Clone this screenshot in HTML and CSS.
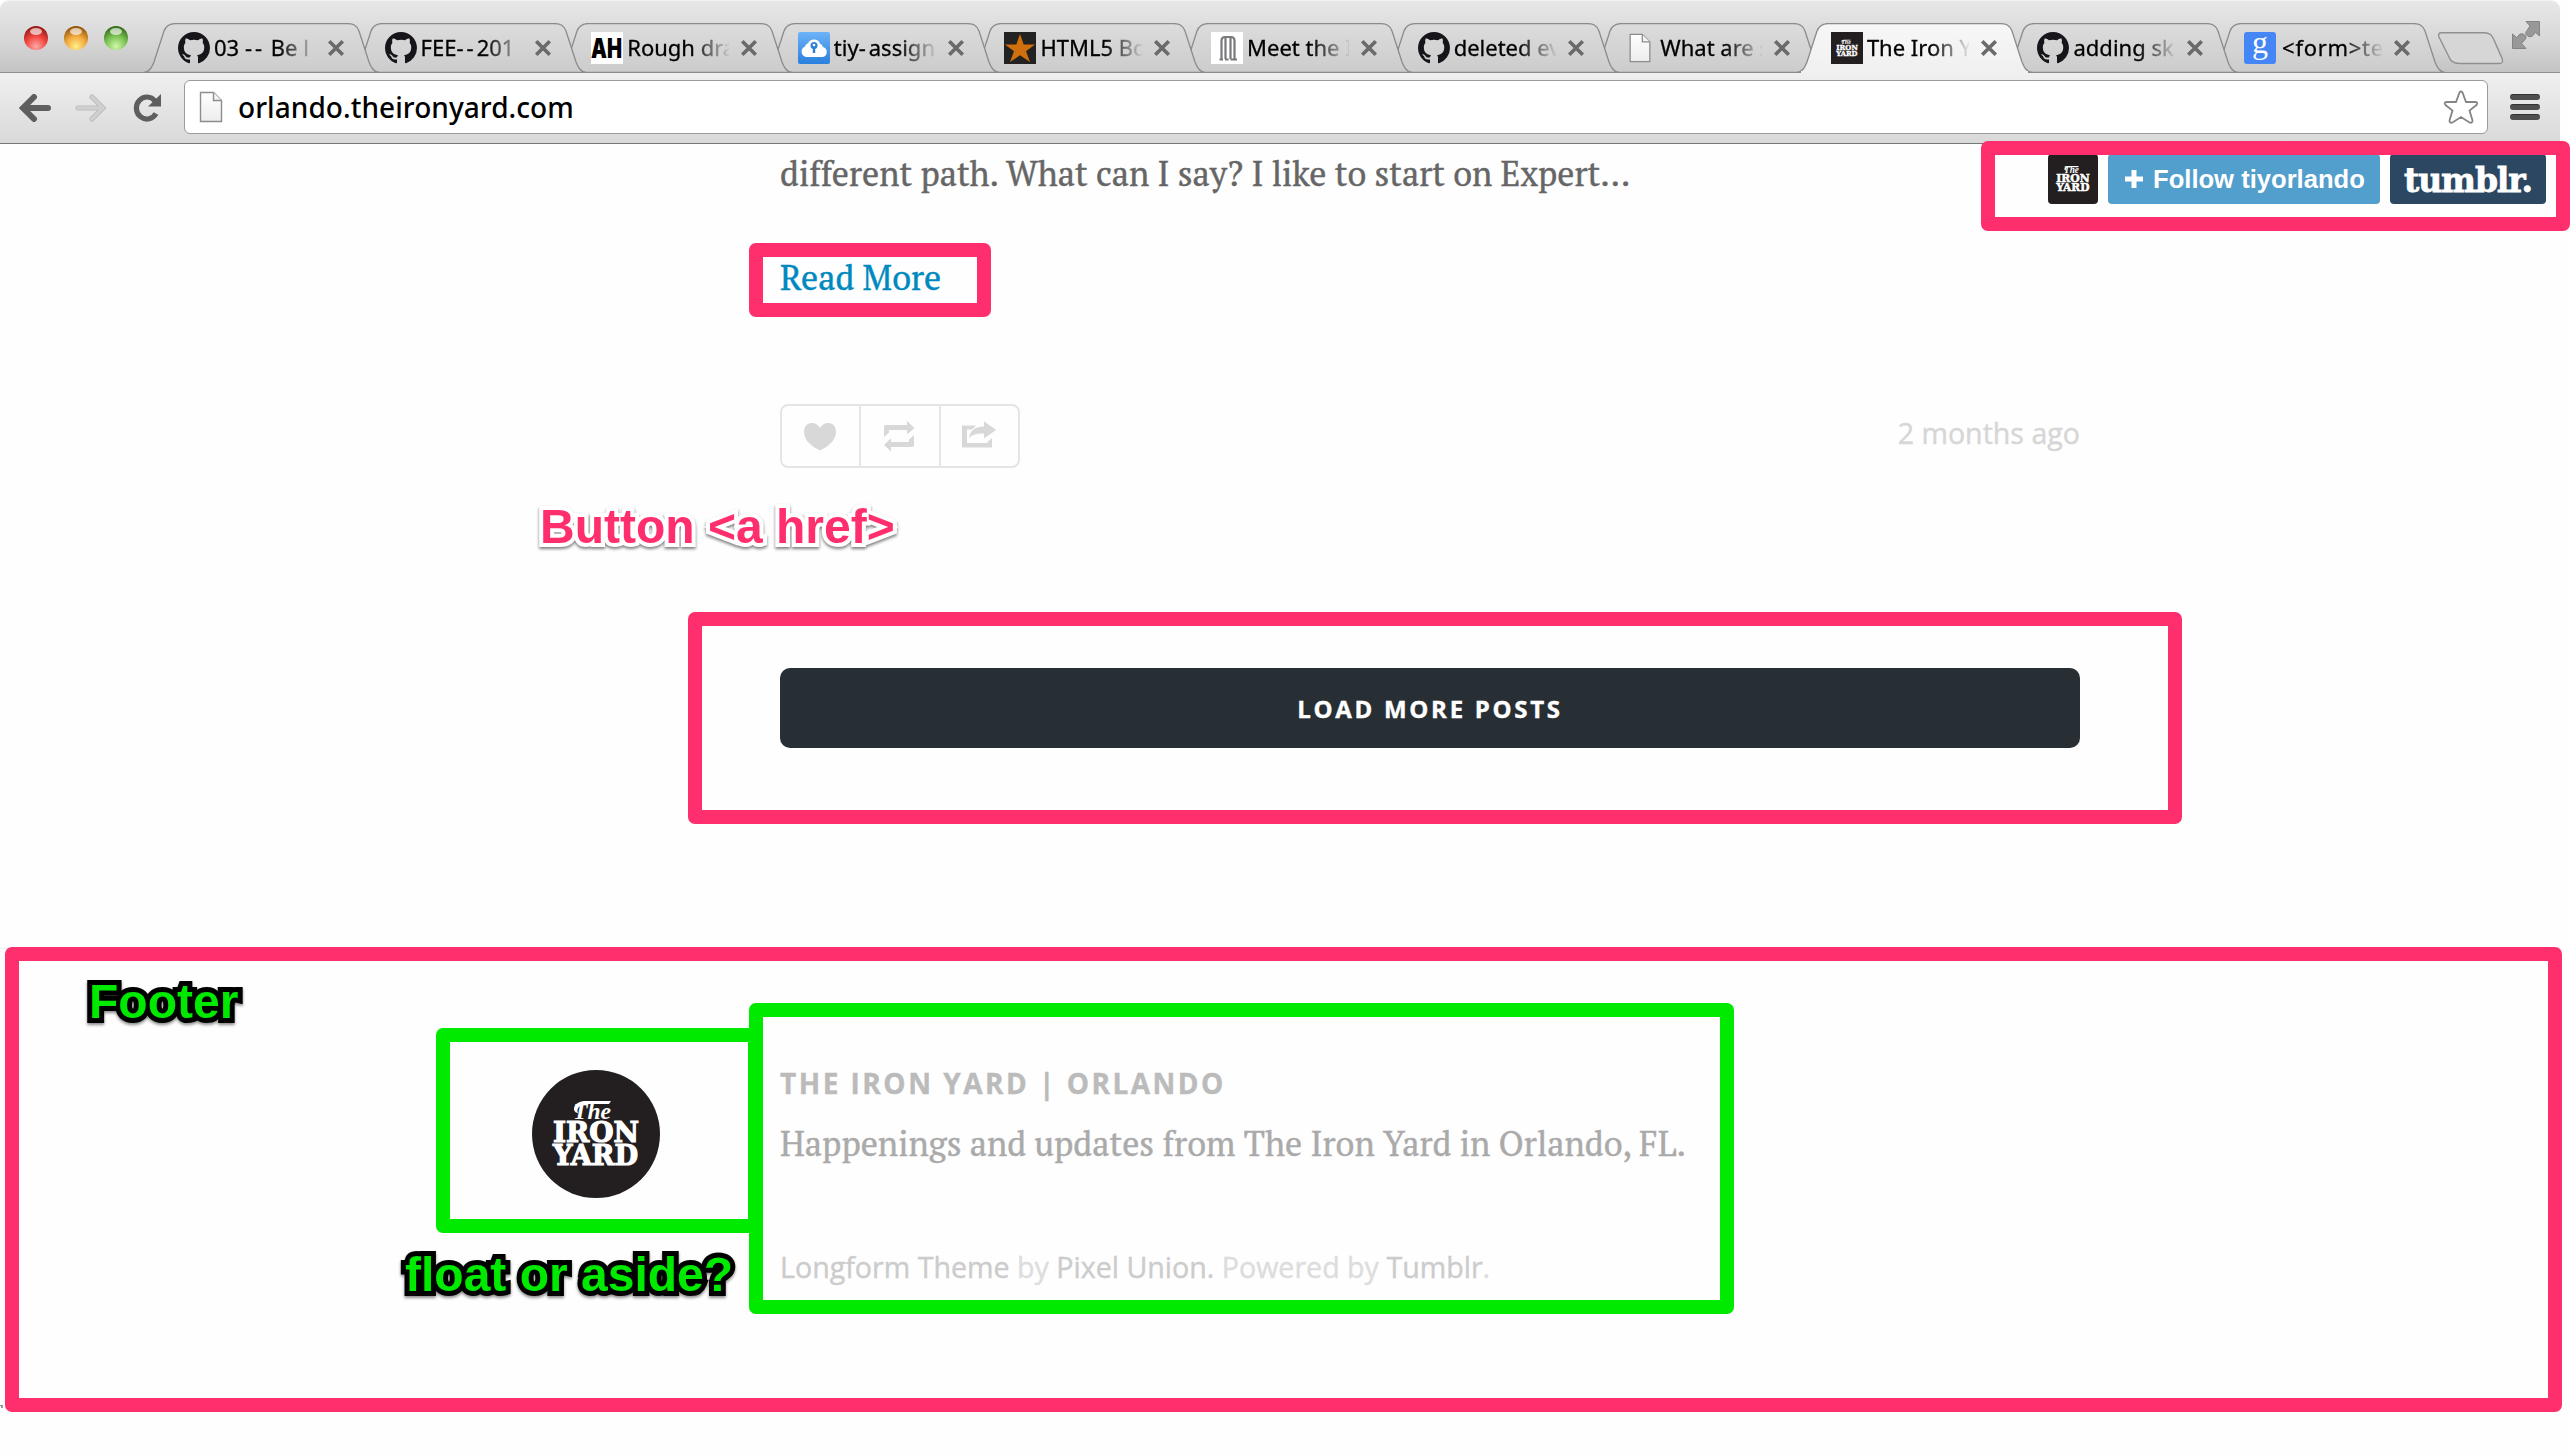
FILE: index.html
```html
<!DOCTYPE html>
<html lang="en">
<head>
<meta charset="utf-8">
<title>The Iron Yard | Orlando</title>
<link rel="stylesheet" href="styles.css">
</head>
<body>
<svg class="defs" width="0" height="0" aria-hidden="true">
  <defs>
    <linearGradient id="tab-fill" x1="0" y1="0" x2="0" y2="1"><stop offset="0" stop-color="#dcdcdd"/><stop offset="1" stop-color="#cccccd"/></linearGradient>
    <linearGradient id="tab-fill-active" x1="0" y1="0" x2="0" y2="1"><stop offset="0" stop-color="#f7f7f7"/><stop offset="1" stop-color="#f0f0f0"/></linearGradient>
    <linearGradient id="sky" x1="0" y1="0" x2="0" y2="1"><stop offset="0" stop-color="#6db3f8"/><stop offset="1" stop-color="#2a80dc"/></linearGradient>
    <linearGradient id="paper" x1="0" y1="0" x2="0" y2="1"><stop offset="0" stop-color="#fff"/><stop offset="1" stop-color="#ececec"/></linearGradient>
    <radialGradient id="red" cx=".5" cy=".85" r=".85"><stop offset="0" stop-color="#ffa9a9"/><stop offset=".5" stop-color="#f2463f"/><stop offset="1" stop-color="#8d1512"/></radialGradient>
    <radialGradient id="amber" cx=".5" cy=".85" r=".85"><stop offset="0" stop-color="#ffef8a"/><stop offset=".5" stop-color="#f2a83a"/><stop offset="1" stop-color="#8a4c06"/></radialGradient>
    <radialGradient id="green" cx=".5" cy=".85" r=".85"><stop offset="0" stop-color="#d2f7a8"/><stop offset=".5" stop-color="#7cc455"/><stop offset="1" stop-color="#2c6613"/></radialGradient>
  </defs>
  <symbol id="tab-shape" viewBox="0 0 235 50">
    <path d="M0 49.5C6 48.5 8 44 10 39L20 8C22.5 2 26 .6 31 .6H203C209 .6 212.500 2 215 8L225 39C227 44 229 48.500 235 49.500Z"/>
  </symbol>
  <symbol id="octocat" viewBox="0 0 16 16"><path fill="#17151a" d="M8 0C3.580 0 0 3.580 0 8c0 3.540 2.290 6.530 5.470 7.590.4.070.55-.17.55-.38 0-.19-.01-.82-.01-1.490-2.010.37-2.530-.49-2.690-.94-.09-.23-.48-.94-.82-1.130-.28-.15-.68-.52-.01-.53.63-.01 1.080.58 1.230.82.72 1.210 1.870.87 2.330.66.07-.52.28-.87.51-1.070-1.780-.2-3.640-.89-3.640-3.950 0-.87.31-1.590.82-2.150-.08-.2-.36-1.020.08-2.120 0 0 .67-.21 2.200.82.64-.18 1.320-.27 2-.27.68 0 1.360.09 2 .27 1.530-1.040 2.200-.82 2.200-.82.44 1.100.16 1.920.08 2.120.51.56.82 1.270.82 2.150 0 3.070-1.870 3.750-3.650 3.950.29.25.54.73.54 1.480 0 1.070-.01 1.930-.01 2.200 0 .21.15.46.55.38A8.013 8.013 0 0016 8c0-4.420-3.580-8-8-8z"/></symbol>
  <symbol id="document" viewBox="0 0 24 32"><path d="M1.500 1.500H14.500L22.500 9.500V30.500H1.500Z" fill="url(#paper)" stroke="#8d8d8d" stroke-width="1.400"/><path d="M14.500 1.500V9.500H22.500" fill="#f4f4f4" stroke="#8d8d8d" stroke-width="1.400"/></symbol>
  <symbol id="close" viewBox="0 0 16 16"><path d="M2 2L14 14M14 2L2 14" stroke="#6a6a6b" stroke-width="3.200" fill="none"/></symbol>
  <symbol id="swash" viewBox="0 0 128 128"><path d="M46 43C39 42 41 31 54 31H79L77 34H56C48 34 44 38 46 43Z" fill="#fff"/></symbol>
</svg>

<div class="window">
  <header class="titlebar">
    <div class="lights">
      <svg viewBox="0 0 26 26"><circle cx="13" cy="13" r="12" fill="url(#red)"/><ellipse cx="13" cy="6.500" rx="6" ry="3.500" fill="#fff" opacity=".65"/></svg>
      <svg viewBox="0 0 26 26"><circle cx="13" cy="13" r="12" fill="url(#amber)"/><ellipse cx="13" cy="6.500" rx="6" ry="3.500" fill="#fff" opacity=".65"/></svg>
      <svg viewBox="0 0 26 26"><circle cx="13" cy="13" r="12" fill="url(#green)"/><ellipse cx="13" cy="6.500" rx="6" ry="3.500" fill="#fff" opacity=".65"/></svg>
    </div>
    <nav class="tabs">
      <div class="tab"><svg class="shape"><use href="#tab-shape"/></svg><svg class="favicon"><use href="#octocat"/></svg><span class="title">03 <span class="dashes">--</span> Be l</span><svg class="close"><use href="#close"/></svg></div>
      <div class="tab"><svg class="shape"><use href="#tab-shape"/></svg><svg class="favicon"><use href="#octocat"/></svg><span class="title">FEE<span class="dashes">--</span>201</span><svg class="close"><use href="#close"/></svg></div>
      <div class="tab"><svg class="shape"><use href="#tab-shape"/></svg><svg class="favicon" viewBox="0 0 32 32"><rect width="32" height="32" fill="#fff"/><text class="ah" x="0" y="26" textLength="31" lengthAdjust="spacingAndGlyphs">AH</text></svg><span class="title">Rough dra</span><svg class="close"><use href="#close"/></svg></div>
      <div class="tab"><svg class="shape"><use href="#tab-shape"/></svg><svg class="favicon" viewBox="0 0 32 32"><rect width="32" height="32" rx="2" fill="url(#sky)"/><path d="M8 25a5.500 5.500 0 0 1-1-10.500a5 5 0 0 1 5-3.500a5 5 0 0 1 9 .500a5 5 0 0 1 4 3.500a5.200 5.200 0 0 1 0 10Z" fill="#fff"/><path d="M11 12a5.500 5.500 0 0 1 10 0" fill="none" stroke="#fff" stroke-width="2.500"/><circle cx="16" cy="13.500" r="3.500" fill="#2f7fd8"/><path d="M14.800 15H17.200V21H14.800Z" fill="#2f7fd8"/><circle cx="16" cy="13" r="1.300" fill="#fff"/></svg><span class="title">tiy<span class="dashes">-</span>assign</span><svg class="close"><use href="#close"/></svg></div>
      <div class="tab"><svg class="shape"><use href="#tab-shape"/></svg><svg class="favicon" viewBox="0 0 32 32"><rect width="32" height="32" fill="#222"/><path d="M16 2L19.700 12.500H31L22 19.200L26 30L16 23.300L6 30L10 19.200L1 12.500H12.300Z" fill="#cf6f0e"/></svg><span class="title">HTML5 Bo</span><svg class="close"><use href="#close"/></svg></div>
      <div class="tab"><svg class="shape"><use href="#tab-shape"/></svg><svg class="favicon" viewBox="0 0 32 32"><rect width="32" height="32" fill="#fff"/><path d="M8.500 27.500H12M14 27.500H17.500M19.500 27.500H26M10.500 27V9Q10.500 5 14 5H20Q23.500 5 23.500 9V27M14.500 27V5.500M19.500 27V5.500" fill="none" stroke="#77797b" stroke-width="2.200"/></svg><span class="title">Meet the I</span><svg class="close"><use href="#close"/></svg></div>
      <div class="tab"><svg class="shape"><use href="#tab-shape"/></svg><svg class="favicon"><use href="#octocat"/></svg><span class="title">deleted ev</span><svg class="close"><use href="#close"/></svg></div>
      <div class="tab"><svg class="shape"><use href="#tab-shape"/></svg><svg class="favicon blank"><use href="#document"/></svg><span class="title">What are s</span><svg class="close"><use href="#close"/></svg></div>
      <div class="tab active"><svg class="shape"><use href="#tab-shape"/></svg><svg class="favicon dark" viewBox="0 0 128 128"><use href="#swash"/><text class="logo-script" x="41" y="49" textLength="38" lengthAdjust="spacingAndGlyphs">The</text><text class="logo-slab" x="21" y="72" textLength="86" lengthAdjust="spacingAndGlyphs">IRON</text><text class="logo-slab" x="21" y="95" textLength="85" lengthAdjust="spacingAndGlyphs">YARD</text></svg><span class="title">The Iron Y</span><svg class="close"><use href="#close"/></svg></div>
      <div class="tab"><svg class="shape"><use href="#tab-shape"/></svg><svg class="favicon"><use href="#octocat"/></svg><span class="title">adding sk</span><svg class="close"><use href="#close"/></svg></div>
      <div class="tab"><svg class="shape"><use href="#tab-shape"/></svg><svg class="favicon" viewBox="0 0 32 32"><rect width="32" height="32" rx="3" fill="#4486f6"/><text class="g" x="16" y="21" text-anchor="middle">g</text></svg><span class="title wide">&lt;form&gt;te</span><svg class="close"><use href="#close"/></svg></div>
    </nav>
    <svg class="new-tab" viewBox="0 0 67 33"><path d="M4.500 .7H47C53 .7 55 3 57 8L65.300 27Q66.500 31.500 62 31.500H23C16 31.500 13.500 29 11.500 24L2 5Q.5 .7 4.500 .7Z"/></svg>
    <svg class="fullscreen" viewBox="0 0 28 28"><path d="M14 .5H27.500V15L23.500 11.500L20 15.500Q17 17 14 13.500Q13 11 15 9.500L18 5Z"/><path d="M.5 13L4.500 16.500L8 13Q11 12 13.500 14.500Q15 17 13 18.500L9.500 22.500L14 27.500H.5Z"/></svg>
  </header>

  <div class="toolbar">
    <div class="nav-buttons">
      <svg viewBox="0 0 32 28"><path d="M15 3L4 14L15 25M5 14H29" fill="none" stroke="#5e5e5f" stroke-width="6" stroke-linecap="round" stroke-linejoin="miter"/></svg>
      <svg viewBox="0 0 32 28"><path d="M17 3L28 14L17 25M27 14H3" fill="none" stroke="#b9b9b9" stroke-width="5" stroke-linecap="round"/><path d="M17 3L28 14L17 25M27 14H3" fill="none" stroke="#cfcfcf" stroke-width="3.400" stroke-linecap="round"/></svg>
      <svg viewBox="0 0 32 28"><path d="M25 19.500A10.500 11 0 1 1 24 7" fill="none" stroke="#5e5e5f" stroke-width="5.200"/><path d="M30 0V12.500H17Z" fill="#5e5e5f"/></svg>
    </div>
    <div class="omnibox">
      <svg class="doc"><use href="#document"/></svg>
      <span class="url">orlando.theironyard.com</span>
      <svg class="star" viewBox="0 0 36 34"><path d="M16.500 2.500Q18 .5 19.500 2.500L23 12H32.500Q35.500 12.500 33.500 15L26.500 20.500L29.500 30.500Q29.500 33.500 26.500 32.500L18 27L9.500 32.500Q6.500 33.500 6.500 30.500L9.500 20.500L2.500 15Q.5 12.500 3.500 12H13Z"/></svg>
    </div>
    <div class="menu"><span></span><span></span><span></span></div>
  </div>

  <main class="page">
    <article class="post">
      <p>different path. What can I say? I like to start on Expert…</p>
      <p><a class="read-more" href="#">Read More</a></p>
      <div class="meta">
        <div class="actions">
          <a href="#"><svg viewBox="0 0 34 32"><path d="M17 30.500C10 27 1 21 1 12C1 6 4.500 3 9 3C12.500 3 15.500 5 17 8C18.500 5 21.500 3 25 3C29.500 3 33 6 33 12C33 21 24 27 17 30.500Z"/></svg></a>
          <a href="#"><svg viewBox="0 0 34 32"><path d="M2 17V7Q2 5 4 5H25V1L32.500 8L25 14.500V10H7V12.500ZM32 15V25Q32 27 30 27H9V31.500L2 25L9 18V22H27V19.500Z"/></svg></a>
          <a href="#"><svg viewBox="0 0 34 32"><path d="M14 5.500H0V27.500H30V18L25.500 22V23H5V9.500H10ZM22 1.200L34 10L22 18.500V13.500C15 13 10 14.500 7 18C8 10 14 6.500 22 6.500Z"/></svg></a>
        </div>
        <time>2 months ago</time>
      </div>
    </article>
    <a class="load-more" href="#">LOAD MORE POSTS</a>
    <footer class="footer">
      <svg class="avatar" viewBox="0 0 128 128"><use href="#swash"/><text class="logo-script" x="41" y="49" textLength="38" lengthAdjust="spacingAndGlyphs">The</text><text class="logo-slab" x="21" y="72" textLength="86" lengthAdjust="spacingAndGlyphs">IRON</text><text class="logo-slab" x="21" y="95" textLength="85" lengthAdjust="spacingAndGlyphs">YARD</text></svg>
      <div class="about">
        <h2>THE IRON YARD | ORLANDO</h2>
        <p>Happenings and updates from The Iron Yard in Orlando, FL.</p>
        <small><a href="#">Longform Theme</a> by <a href="#">Pixel Union.</a> Powered by <a href="#">Tumblr</a>.</small>
      </div>
    </footer>
  </main>

  <aside class="tumblr-controls">
    <svg class="thumb" viewBox="0 0 128 128"><use href="#swash"/><text class="logo-script" x="41" y="49" textLength="38" lengthAdjust="spacingAndGlyphs">The</text><text class="logo-slab" x="21" y="72" textLength="86" lengthAdjust="spacingAndGlyphs">IRON</text><text class="logo-slab" x="21" y="95" textLength="85" lengthAdjust="spacingAndGlyphs">YARD</text></svg>
    <a class="follow" href="#"><svg viewBox="0 0 20 20"><path d="M7.500 1H12.500V7.500H19V12.500H12.500V19H7.500V12.500H1V7.500H7.500Z"/></svg>Follow tiyorlando</a>
    <a class="tumblr" href="#">tumblr.</a>
  </aside>
</div>
<div class="corner"></div>

<div class="box pink box-follow"></div>
<div class="box pink box-read"></div>
<div class="box pink box-load"></div>
<div class="box pink box-footer"></div>
<div class="box green box-avatar"></div>
<div class="box green box-about"></div>
<div class="label pink-label label-button">Button &lt;a href&gt;</div>
<div class="label green-label label-footer">Footer</div>
<div class="label green-label label-float">float or aside?</div>
</body>
</html>
```
FILE: styles.css
```css
* { box-sizing: border-box; }
html { background: #fff; }
body {
  margin: 0;
  position: relative;
  width: 2570px;
  height: 1454px;
  overflow: hidden;
  background: #fefefe;
  font-family: "Open Sans", sans-serif;
}
a { color: inherit; text-decoration: none; }
p, h2 { margin: 0; }
svg { display: block; flex: none; }
.defs { position: absolute; }

.window { position: relative; width: 2560px; }

/* Title bar and tabs */
.titlebar {
  display: flex;
  height: 73px;
  border-top: 1px solid #f4f4f4;
  border-bottom: 1px solid #8f8f8f;
  border-radius: 9px 9px 0 0;
  background: linear-gradient(#e7e7e7, #d9d9d9 50%, #c4c4c4);
}
.lights { display: flex; flex: none; gap: 14px; padding: 24px 0 0 23px; width: 144px; }
.lights svg { width: 26px; height: 26px; }
.tabs { display: flex; flex: none; padding-top: 22px; }
.tab {
  position: relative;
  display: flex;
  flex: none;
  align-items: center;
  width: 235px;
  height: 50px;
  margin-right: -28.400px;
  padding-left: 34px;
  font: 22px/32px "Noto Sans", sans-serif;
  color: #000;
  -webkit-text-stroke: .3px #000;
}
.tab:nth-child(1) { z-index: 11; }
.tab:nth-child(2) { z-index: 10; }
.tab:nth-child(3) { z-index: 9; }
.tab:nth-child(4) { z-index: 8; }
.tab:nth-child(5) { z-index: 7; }
.tab:nth-child(6) { z-index: 6; }
.tab:nth-child(7) { z-index: 5; }
.tab:nth-child(8) { z-index: 4; }
.tab:nth-child(9) { z-index: 3; }
.tab:nth-child(10) { z-index: 2; }
.tab:nth-child(11) { z-index: 1; }
.tab.active { z-index: 12; }
.shape {
  position: absolute;
  inset: 0;
  width: 235px;
  height: 50px;
  fill: url(#tab-fill);
  stroke: #8b8b8c;
  stroke-width: 1.300px;
}
.active .shape { fill: url(#tab-fill-active); }
.active::after {
  content: "";
  position: absolute;
  left: 4px;
  right: 4px;
  bottom: -1px;
  height: 3px;
  background: #f0f0f0;
}
.favicon { position: relative; width: 32px; height: 32px; margin-top: -1px; }
.favicon.blank { width: 24px; height: 30px; margin: 0 4px; }
.favicon.dark { background: #231f20; }
.title {
  position: relative;
  width: 102px;
  margin: -2px 0 0 4px;
  white-space: nowrap;
  -webkit-mask-image: linear-gradient(90deg, #000 64px, transparent 104px);
  mask-image: linear-gradient(90deg, #000 64px, transparent 104px);
}
.title.wide { padding-left: 2px; letter-spacing: .7px; }
.dashes { letter-spacing: 3px; }
.close { position: relative; width: 18px; height: 18px; margin-left: 11px; }
.ah { font: 900 27px "Inter", sans-serif; }
.g { font: 32px "Liberation Serif", serif; fill: #fff; stroke: none; }
.new-tab {
  width: 67px;
  height: 33px;
  margin: 31px 0 0 20px;
  fill: #d6d6d6;
  stroke: #8f8f8f;
  stroke-width: 1.400px;
}
.fullscreen { width: 28px; height: 28px; margin: 20px 20px 0 auto; fill: #989898; stroke: #848484; stroke-width: 1px; }

/* Toolbar */
.toolbar {
  display: flex;
  align-items: flex-start;
  height: 71px;
  padding-top: 7px;
  border-bottom: 1px solid #777779;
  background: linear-gradient(#f0f0f0, #d9d9d9);
}
.nav-buttons { display: flex; gap: 24px; width: 184px; padding: 14px 0 0 19px; }
.nav-buttons svg { width: 32px; height: 28px; }
.omnibox {
  display: flex;
  align-items: center;
  width: 2304px;
  height: 54px;
  padding: 0 8px 0 14px;
  border: 1.500px solid #9b9b9b;
  border-radius: 6px;
  background: #fff;
}
.doc { width: 24px; height: 32px; }
.url { flex: 1; margin: -1px 0 0 15px; font: 500 28px/40px "Noto Sans", sans-serif; letter-spacing: .06px; color: #000; }
.star { width: 36px; height: 34px; fill: #fff; stroke: #858585; stroke-width: 1.800px; }
.menu { display: flex; flex-direction: column; gap: 4px; padding: 14px 0 0 22px; }
.menu span { width: 30px; height: 6px; border-radius: 3px; background: #4f4f50; border-top: 1px solid #333; }

/* Blog page */
.page { padding: 4px 0 0 780px; font-family: "PT Serif", "DejaVu Serif Condensed", serif; -webkit-text-stroke-width: .4px; }
.post { width: 1300px; font-size: 34.100px; line-height: 52px; color: #666; }
.post p + p { margin-top: 52px; }
.read-more { color: #0089bf; }
.meta { display: flex; justify-content: space-between; margin-top: 100px; }
.actions { display: flex; width: 240px; height: 64px; border: 2px solid #e5e5e5; border-radius: 8px; }
.actions a { display: flex; flex: 1; align-items: center; justify-content: center; }
.actions a + a { border-left: 2px solid #e5e5e5; }
.actions svg { width: 34px; height: 32px; margin: -1px 0 0 -1px; fill: #d8d8d8; }
time { padding-top: 9px; font: 28.580px/40px "Open Sans", sans-serif; color: #d6d6d6; }
.load-more {
  display: flex;
  align-items: center;
  justify-content: center;
  width: 1300px;
  height: 80px;
  margin-top: 200px;
  border-radius: 10px;
  background: #272f35;
  color: #fff;
  font: 700 24px "Open Sans", sans-serif;
  letter-spacing: 2.700px;
}
.footer {
  display: flex;
  gap: 120px;
  margin: 200px 0 0 -780px;
  padding: 114px 0 0 532px;
  border-top: 1px solid #eee;
}
.avatar { width: 128px; height: 128px; margin-top: 7px; border-radius: 50%; background: #231f20; }
.logo-script { font: italic 700 24px "Liberation Serif", serif; fill: #fff; stroke: none; }
.logo-slab { font: 700 27.500px "DejaVu Serif", serif; fill: #fff; stroke: #fff; stroke-width: 1.200px; }
.about h2 { font: 700 28px/40px "Open Sans", sans-serif; letter-spacing: 2.500px; color: #bbb; }
.about p { margin-top: 15px; font-size: 34.130px; line-height: 52px; color: #aaa; }
.about small { display: block; margin-top: 77px; font: 28.620px/40px "Open Sans", sans-serif; color: #ddd; }
.about small a { color: #ccc; }

/* Follow controls float over the page corner */
.tumblr-controls { position: absolute; top: 154px; right: 14px; display: flex; gap: 10px; height: 50px; }
.tumblr-controls > * { border-radius: 4px; }
.thumb { width: 50px; height: 50px; background: #231f20; }
.follow {
  display: flex;
  align-items: center;
  gap: 9px;
  width: 272px;
  padding: 0 0 0 16px;
  background: #529ecc;
  color: #fff;
  font: 700 25.600px "Liberation Sans", sans-serif;
}
.follow svg { width: 20px; height: 20px; fill: #fff; }
.tumblr {
  width: 156px;
  background: #2c4762;
  color: #fff;
  font: 700 33px/54px "DejaVu Serif", serif;
  letter-spacing: -1.100px;
  text-align: center;
  -webkit-text-stroke: .8px #fff;
}
.corner { position: absolute; left: 0; top: 1405px; width: 3px; height: 3px; border-top: 1px solid #888; border-right: 2px solid #999; }

/* Annotations drawn over the page */
.box { position: absolute; border: 14px solid; border-radius: 7px; }
.pink { border-color: #ff2f6d; }
.green { border-color: #00ea00; }
.box-follow { left: 1981px; top: 141px; width: 589px; height: 90px; }
.box-read { left: 749px; top: 243px; width: 242px; height: 74px; }
.box-load { left: 688px; top: 612px; width: 1494px; height: 212px; }
.box-footer { left: 5px; top: 947px; width: 2557px; height: 465px; }
.box-avatar { left: 436px; top: 1028px; width: 326px; height: 205px; }
.box-about { left: 749px; top: 1003px; width: 985px; height: 311px; }
.label {
  position: absolute;
  font: 700 48px/56px "Liberation Sans", sans-serif;
  white-space: nowrap;
  paint-order: stroke fill;
  stroke-linejoin: round;
}
.pink-label { color: #ff2f6d; -webkit-text-stroke: 8px #fff; filter: drop-shadow(0 2px 1.500px rgba(0, 0, 0, .5)); }
.green-label { color: #00ea00; -webkit-text-stroke: 10px #000; filter: drop-shadow(0 2px 1.500px rgba(0, 0, 0, .45)); }
.label-button { left: 540px; top: 499px; }
.label-footer { left: 89px; top: 974px; }
.label-float { left: 405px; top: 1247px; }
```
